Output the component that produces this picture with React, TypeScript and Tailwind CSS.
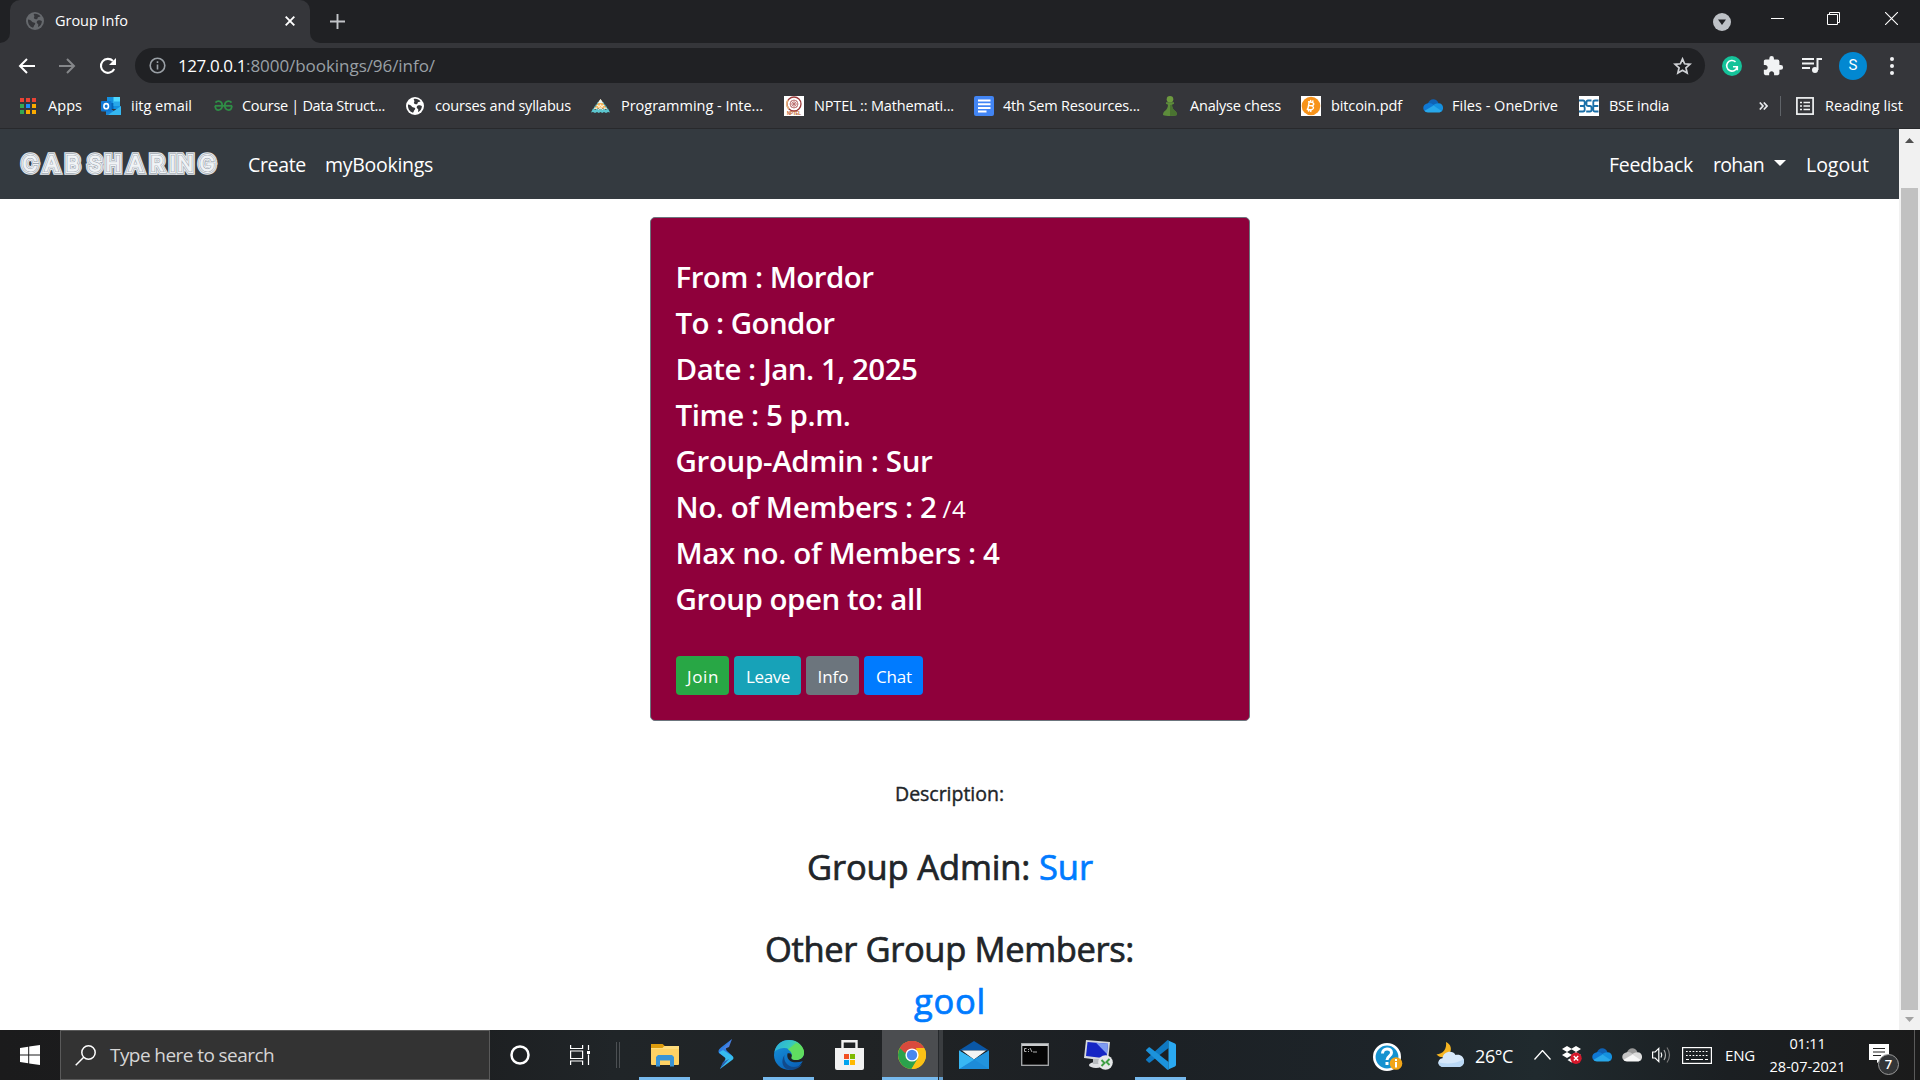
import { useLayoutEffect, useRef, useState } from "react";
import type { ReactNode } from "react";

/* Single line of text whose tracking is adjusted so that it fills a given width. */
function Fit({ w, className = "", children }: { w: number; className?: string; children: string }) {
  const ref = useRef<HTMLSpanElement>(null);
  const [spacing, setSpacing] = useState(0);
  useLayoutEffect(() => {
    if (ref.current) setSpacing((w - ref.current.getBoundingClientRect().width) / children.length);
  }, []);
  return (
    <span ref={ref} className={"inline-block shrink-0 whitespace-pre " + className} style={{ letterSpacing: spacing + "px" }}>
      {children}
    </span>
  );
}

/* ---------- small icons ---------- */

const GlobeIcon = ({ size, fill, land }: { size: number; fill: string; land: string }) => (
  <svg width={size} height={size} viewBox="0 0 18 18">
    <circle cx="9" cy="9" r="9" fill={fill} />
    <path d="M2 7.500c2 .2 3.500 1 4 2.200.8 1 2.800.3 3.200 1.600.2 1.200-1 1.700-1.300 2.600-.2.900-.6 1.900-1.500 1.700C3.600 14.500 1.600 11.500 2 7.500zM7.800 2c2.500-.6 5.200.4 6.700 2.300-.6.8-1.800.4-2.500 1-.6.600-.2 1.700-1.200 2-1 .2-2.200-.2-2.800-1-.5-.8.600-1.300.4-2.200-.1-.7-.9-1.200-.6-2.100zM12 8.500c1.400-.5 3 .2 3.900.7-.1 2.400-1.500 4.800-3.600 5.900-.7-.7.3-1.700 0-2.600-.4-.8-1.500-1-1.600-2-.1-.8.500-1.700 1.300-2z" fill={land} />
  </svg>
);

const AppsIcon = () => (
  <span className="grid w-4 grid-cols-3 gap-x-[2px] gap-y-[2px]">
    <i className="h-[4px] bg-[#ea4335]" /><i className="h-[4px] bg-[#ea4335]" /><i className="h-[4px] bg-[#ea4335]" />
    <i className="h-[4px] bg-[#34a853]" /><i className="h-[4px] bg-[#1a8cff]" /><i className="h-[4px] bg-[#fbab00]" />
    <i className="h-[4px] bg-[#34a853]" /><i className="h-[4px] bg-[#fbab00]" /><i className="h-[4px] bg-[#fbab00]" />
  </span>
);

const OutlookIcon = () => (
  <svg width="20" height="18" viewBox="0 0 20 18">
    <rect x="6" y="0" width="13" height="12" fill="#1490df" />
    <rect x="12.500" y="0" width="6.500" height="6" fill="#50d9ff" />
    <rect x="6" y="6" width="6.500" height="6" fill="#0364b8" />
    <rect x="12.500" y="4.500" width="6.500" height="4.500" fill="#28a8ea" />
    <path d="M5 9l8 5 7-5v9H5z" fill="#1a86d8" />
    <path d="M20 9v9H7z" fill="#35b8f1" />
    <rect x="0" y="4" width="10.500" height="10.500" rx="1" fill="#0f78d4" />
    <ellipse cx="5.200" cy="9.200" rx="2.300" ry="2.600" fill="none" stroke="#fff" strokeWidth="1.600" />
  </svg>
);

const GfgIcon = () => (
  <svg width="19" height="12" viewBox="0 0 19 12" fill="none" stroke="#2f8d46" strokeWidth="1.800">
    <path d="M1 5.800h17" />
    <path d="M1.500 2.600C3 .6 6.600.500 7.800 3.200c1.300 3.300-.3 7-3.300 7-1.900 0-3.200-1.700-3.400-4.400" />
    <path d="M17.500 2.600C16 .6 12.400.500 11.200 3.200c-1.300 3.300.3 7 3.300 7 1.900 0 3.200-1.700 3.400-4.400" />
  </svg>
);

const PyramidIcon = () => (
  <svg width="19" height="14" viewBox="0 0 19 14">
    <path d="M9.500 0L16 9.500H3z" fill="#f5b45c" />
    <path d="M9.500 0l2.700 4H6.800z" fill="#e8f6f6" />
    <path d="M5 6.500h2l1 1.500 1.500-2L11 8l1-1.500h2M3 10l2-1 2 2 2.500-2 2.500 2 2-2 2 1" stroke="#fff1d4" strokeWidth="1.100" fill="none" />
    <path d="M0 13.500l2-4 2 1.500 2-1.500 2 1.500 1.500-1.500L11 11l2-1.500 2 1.500 2-1.500 2 4-2-.600-2 1-2-1-1.800 1-1.700-1-1.700 1-1.800-1-2 1-2-1z" fill="#5cc6cf" />
    <path d="M7 3.500L2.500 10M12 3.500l4.500 6.500" stroke="#5cc6cf" strokeWidth="1.200" strokeDasharray="1.500 1" />
  </svg>
);

const NptelIcon = () => (
  <svg width="20" height="20" viewBox="0 0 20 20">
    <rect width="20" height="20" fill="#fff" />
    <circle cx="10" cy="8" r="7" fill="none" stroke="#9c3a3a" strokeWidth="1.300" />
    <path d="M4 4a7 7 0 0 0 1 9" stroke="#e6b07a" strokeWidth="1.800" fill="none" />
    <g stroke="#b56a6a" strokeWidth="0.800">
      <circle cx="10" cy="8" r="4" fill="#f9eaea" />
      <path d="M10 4v8M6 8h8M7.200 5.200l5.600 5.600M12.800 5.200l-5.600 5.600" />
    </g>
    <text x="3" y="19.400" fontSize="4.500" fontWeight="700" fill="#c0602c" textLength="14" fontFamily="Liberation Sans, sans-serif">NPTEL</text>
  </svg>
);

const DocsIcon = () => (
  <svg width="20" height="20" viewBox="0 0 20 20">
    <rect width="20" height="20" rx="2" fill="#4285f4" />
    <path d="M4 4.500h12.500M4 8.300h12.500M4 12h12.500M4 15.500h8.500" stroke="#fff" strokeWidth="1.900" />
  </svg>
);

const PawnIcon = () => (
  <svg width="14" height="20" viewBox="0 0 14 20">
    <circle cx="7" cy="3.300" r="3.300" fill="#6d9a3f" />
    <path d="M3 6.300h8v1.500L9 8.800c0 3 1.500 5 3.200 6.200 1.300 1 1.800 2 1.800 4-3 1.300-11 1.300-14 0 0-2 .5-3 1.800-4C3.500 13.800 5 11.800 5 8.800L3 7.800z" fill="#5d8c3b" />
    <path d="M7 9v10.900c3 0 5-.3 7-.9 0-2-.5-3-1.800-4C10.500 13.800 9 11.800 9 8.800z" fill="#4a7331" />
  </svg>
);

const BitcoinIcon = () => (
  <svg width="20" height="20" viewBox="0 0 20 20">
    <rect width="20" height="20" fill="#fff" />
    <circle cx="10" cy="10" r="9.300" fill="#f7931a" />
    <path d="M8.300 5.500l-1.700 8.800M7 5.800l4 .6c2.700.6 2.200 3.500-.9 3.300l-2.200-.3 2.700.4c3 .8 2.300 4.200-1.300 3.900l-3.600-.5M9.800 4l-.4 2M12 4.400l-.4 2M7.900 13.600l-.4 2M10 14l-.4 2" fill="none" stroke="#fff" strokeWidth="1.400" />
  </svg>
);

const CloudIcon = ({ w, dark, mid, light, low }: { w: number; dark: string; mid: string; light: string; low: string }) => (
  <svg width={w} height={(w * 14) / 20} viewBox="0 0 20 14">
    <path d="M4.800 5C6.200-.8 13.600-1.500 15.500 4.300L11 8.500z" fill={dark} />
    <path d="M4.800 4.300c2.200-.6 4 .4 6.200 2L3 13C-.8 11.600-1 5.500 4.800 4.300z" fill={mid} />
    <path d="M15.500 4.300c5.300 0 5.700 6.700 2.500 8.400L9.500 7c1.500-1.600 3.400-2.700 6-2.700z" fill={light} />
    <path d="M10.500 6.400L18.600 12c-.7.800-1.500 1.500-3 1.500H4.800c-1.400 0-2.500-.7-3.200-1.700z" fill={low} />
  </svg>
);

const BseIcon = () => (
  <svg width="20" height="20" viewBox="0 0 20 20">
    <rect width="20" height="20" fill="#fff" />
    <path d="M0 4.500h4Q5.700 4.500 5.700 6v2.300Q5.700 10 4 10H1h3Q5.700 10 5.700 12v1.800Q5.700 15.500 4 15.500H0M12.500 4.500H9Q7.500 4.500 7.500 6v2.500Q7.500 10 9 10h2Q12.500 10 12.500 11.700v2q0 1.800-1.500 1.800H7.200M19.500 4.500H16Q14.300 4.500 14.300 6v8q0 1.500 1.700 1.500h3.500M14.300 10h5" fill="none" stroke="#1a6fa8" strokeWidth="1.800" />
  </svg>
);

/* ---------- browser chrome ---------- */

function TabStrip() {
  return (
    <div className="flex h-[43px] bg-[#202124]">
      <div className="flex w-[10px] items-end"><span className="size-[10px] bg-[#35363a]"><span className="block size-full rounded-br-[10px] bg-[#202124]" /></span></div>
      <div className="flex w-[300px] items-center rounded-t-[10px] bg-[#35363a] pb-[1px] pl-4">
        <GlobeIcon size={18} fill="#66696d" land="#35363a" />
        <Fit w={73} className="ml-[11px] text-[14.5px] text-white">Group Info</Fit>
        <svg className="mr-[15px] ml-auto" width="10" height="10" viewBox="0 0 10 10" stroke="#fff" strokeWidth="1.900"><path d="M.7.700l8.600 8.600M9.300.700L.7 9.300" /></svg>
      </div>
      <div className="flex w-[10px] items-end"><span className="size-[10px] bg-[#35363a]"><span className="block size-full rounded-bl-[10px] bg-[#202124]" /></span></div>
      <svg className="mt-[14px] ml-[10px]" width="15" height="15" viewBox="0 0 15 15" stroke="#c2c4c8" strokeWidth="1.900"><path d="M7.500 0v15M0 7.500h15" /></svg>
      <div className="ml-auto flex">
        <svg className="mt-[13px]" width="18" height="18" viewBox="0 0 18 18"><circle cx="9" cy="9" r="9" fill="#bdc1c6" /><path d="M5 6.500h8L9 12z" fill="#202124" /></svg>
        <svg className="mt-3 ml-10" width="13" height="13" viewBox="0 0 13 13" stroke="#fff"><path d="M0 6.500h13" /></svg>
        <svg className="mt-3 ml-[43px]" width="13" height="13" viewBox="0 0 13 13" stroke="#fff" fill="none"><path d="M.5 2.500h10v10H.5zM2.500 2.500v-2h10v10h-2" /></svg>
        <svg className="mt-3 mr-[22px] ml-[45px]" width="13" height="13" viewBox="0 0 13 13" stroke="#fff" strokeWidth="1.100"><path d="M0 0l13 13M13 0L0 13" /></svg>
      </div>
    </div>
  );
}

function AddressBar() {
  return (
    <div className="flex h-[45px] items-center bg-[#35363a] pl-[18px]">
      <svg width="17" height="16" viewBox="0 0 17 16" fill="none" stroke="#fff" strokeWidth="2"><path d="M17 8H2M9 1L2 8l7 7" /></svg>
      <svg className="ml-[24px]" width="17" height="16" viewBox="0 0 17 16" fill="none" stroke="#85878a" strokeWidth="2"><path d="M0 8h15M8 1l7 7-7 7" /></svg>
      <svg className="ml-[23px]" width="18" height="18" viewBox="0 0 18 18" fill="none" stroke="#fff" strokeWidth="2.100"><path d="M15.200 12A7 7 0 1 1 14 4" /><path d="M17 1v7h-7z" fill="#fff" stroke="none" /></svg>
      <div className="ml-[18px] flex h-[35px] w-[1570px] items-center rounded-full bg-[#202124] pr-[13px] pl-[14px]">
        <svg width="17" height="17" viewBox="0 0 17 17" fill="none" stroke="#9aa0a6" strokeWidth="1.600"><circle cx="8.500" cy="8.500" r="7.300" /><path d="M8.500 7.500v5M8.500 4.300v1.700" /></svg>
        <Fit w={68} className="ml-[12px] text-[17px] text-white">127.0.0.1</Fit>
        <Fit w={189} className="text-[17px] text-[#9aa0a6]">:8000/bookings/96/info/</Fit>
        <svg className="ml-auto" width="19" height="18" viewBox="0 0 24 23" fill="none" stroke="#d0d2d6" strokeWidth="2.200"><path d="M12 2.500l2.700 6.200 6.800.6-5.100 4.500 1.500 6.600L12 16.900l-5.900 3.500 1.500-6.600-5.100-4.500 6.800-.6z" /></svg>
      </div>
      <svg className="ml-[17px]" width="20" height="20" viewBox="0 0 20 20"><circle cx="10" cy="10" r="10" fill="#15c39a" /><path d="M13.500 5.800A5.300 5.300 0 1 0 15 11.500M11 10.800h4.300v3.500" fill="none" stroke="#fff" strokeWidth="1.600" /></svg>
      <svg className="ml-[20px]" width="22" height="22" viewBox="0 0 24 24" fill="#f1f3f4"><path d="M20.500 11H19V7c0-1.100-.9-2-2-2h-4V3.500a2.500 2.500 0 0 0-5 0V5H4c-1.100 0-1.990.9-1.990 2v3.800H3.500c1.490 0 2.700 1.210 2.700 2.700s-1.210 2.700-2.700 2.700H2V20c0 1.100.9 2 2 2h3.800v-1.500c0-1.490 1.210-2.700 2.700-2.700s2.700 1.210 2.700 2.700V22H17c1.100 0 2-.9 2-2v-4h1.500a2.500 2.500 0 0 0 0-5z" /></svg>
      <svg className="ml-[18px]" width="20" height="17" viewBox="0 0 20 17" fill="none" stroke="#f1f3f4" strokeWidth="2"><path d="M0 2h12M0 6.500h12M0 11h8M15.500 13V2h4.500" /><circle cx="13" cy="13" r="3" fill="#f1f3f4" stroke="none" /></svg>
      <div className="ml-[17px] flex size-7 items-center justify-center rounded-full bg-[#0288d1] font-[Roboto,sans-serif] text-[15px] text-white">S</div>
      <div className="ml-[23px] flex flex-col gap-[3px]">
        <i className="size-[4px] rounded-full bg-[#f1f3f4]" /><i className="size-[4px] rounded-full bg-[#f1f3f4]" /><i className="size-[4px] rounded-full bg-[#f1f3f4]" />
      </div>
    </div>
  );
}

const bookmarks: { icon: ReactNode; label: string; w: number; item: string; slot: string }[] = [
  { icon: <AppsIcon />, label: "Apps", w: 34, item: "w-[81px]", slot: "w-[28px]" },
  { icon: <OutlookIcon />, label: "iitg email", w: 61, item: "w-[113px]", slot: "w-[30px]" },
  { icon: <GfgIcon />, label: "Course | Data Struct...", w: 143, item: "w-[192px]", slot: "w-[28px]" },
  { icon: <GlobeIcon size={18} fill="#fff" land="#35363a" />, label: "courses and syllabus", w: 136, item: "w-[185px]", slot: "w-[29px]" },
  { icon: <PyramidIcon />, label: "Programming - Inte...", w: 142, item: "w-[193px]", slot: "w-[30px]" },
  { icon: <NptelIcon />, label: "NPTEL :: Mathemati...", w: 140, item: "w-[190px]", slot: "w-[30px]" },
  { icon: <DocsIcon />, label: "4th Sem Resources...", w: 137, item: "w-[189px]", slot: "w-[29px]" },
  { icon: <PawnIcon />, label: "Analyse chess", w: 91, item: "w-[138px]", slot: "w-[27px]" },
  { icon: <BitcoinIcon />, label: "bitcoin.pdf", w: 71, item: "w-[122px]", slot: "w-[30px]" },
  { icon: <CloudIcon w={20} dark="#0f62b5" mid="#0f78d4" light="#1490df" low="#28a8ea" />, label: "Files - OneDrive", w: 106, item: "w-[156px]", slot: "w-[29px]" },
  { icon: <BseIcon />, label: "BSE india", w: 60, item: "w-[180px]", slot: "w-[30px]" },
];

function BookmarksBar() {
  return (
    <div className="flex h-[41px] items-center border-b border-[#28292c] bg-[#35363a] pb-[4px] pl-5 text-[14.500px] text-white">
      {bookmarks.map((b) => (
        <div key={b.label} className={"flex shrink-0 items-center " + b.item}>
          <span className={"flex shrink-0 " + b.slot}>{b.icon}</span>
          <Fit w={b.w}>{b.label}</Fit>
        </div>
      ))}
      <svg width="9" height="8" viewBox="0 0 9 8" fill="none" stroke="#e8eaed" strokeWidth="1.700"><path d="M.8.500L4 4 .8 7.500M4.800.500L8 4 4.800 7.500" /></svg>
      <span className="ml-[12px] h-5 w-px bg-[#5f6368]" />
      <svg className="ml-[15px]" width="18" height="18" viewBox="0 0 18 18" fill="none" stroke="#f1f3f4" strokeWidth="1.700"><rect x=".9" y=".9" width="16.200" height="16.200" /><path d="M4 5.500h2M4 9h2M4 12.500h2M7.500 5.500h6.500M7.500 9h6.500M7.500 12.500h6.500" /></svg>
      <Fit w={78} className="ml-[11px]">Reading list</Fit>
    </div>
  );
}

/* ---------- page ---------- */

/* Inline display lettering: concentric contour lines around thin letters. */
function Logo() {
  const xs = "22.500 44.500 66 88.500 105.500 128.500 150.500 170 177.500 199.500";
  const layers: [number, string][] = [[7.4, "#e6eaef"], [5.4, "#a3aab3"], [4.200, "#f1f4f7"], [2.200, "#a3aab3"], [1, "#f1f4f7"]];
  return (
    <svg className="shrink-0" width="220" height="70" viewBox="0 0 220 70" fontFamily="Inter, sans-serif" fontWeight="300" fontSize="20.500" strokeLinejoin="miter" strokeMiterlimit="2">
      {layers.map(([sw, c]) => (
        <text key={sw} x={xs} y="41.500" fill={c} stroke={c} strokeWidth={sw}>CABSHARING</text>
      ))}
    </svg>
  );
}

function Navbar() {
  return (
    <nav className="flex h-[70px] items-center bg-[#343a40] text-[19.500px] text-white">
      <Logo />
      <Fit w={58} className="mt-[2px] ml-[28px]">Create</Fit>
      <Fit w={108} className="mt-[2px] ml-[19px]">myBookings</Fit>
      <Fit w={84} className="mt-[2px] ml-auto">Feedback</Fit>
      <Fit w={51} className="mt-[2px] ml-[20px]">rohan</Fit>
      <svg className="mb-[2px] ml-[10px]" width="12" height="6" viewBox="0 0 12 6"><path d="M0 0h12L6 6z" fill="#fff" /></svg>
      <Fit w={63} className="mt-[2px] mr-[30px] ml-[20px]">Logout</Fit>
    </nav>
  );
}

const details: { text: string; w: number; suffix?: string }[] = [
  { text: "From : Mordor", w: 198 },
  { text: "To : Gondor", w: 159 },
  { text: "Date : Jan. 1, 2025", w: 242 },
  { text: "Time : 5 p.m.", w: 175 },
  { text: "Group-Admin : Sur", w: 257 },
  { text: "No. of Members : 2", w: 261, suffix: "/4" },
  { text: "Max no. of Members : 4", w: 324 },
  { text: "Group open to: all", w: 247 },
];

function Button({ w, className, children }: { w: number; className: string; children: string }) {
  return (
    <button className={"flex h-[39px] items-center justify-center rounded-[4px] pt-[2px] pl-[2px] text-[17px] text-white " + className}>
      <Fit w={w}>{children}</Fit>
    </button>
  );
}

function Page() {
  return (
    <main className="flex h-[831px] flex-1 flex-col items-center overflow-hidden bg-white pt-[18px] text-[#212529]">
      <section className="h-[504px] w-[600px] shrink-0 rounded-[5px] border border-[#6c757d] bg-[#8f003b] px-[25px] pt-[36px]">
        {details.map((d) => (
          <div key={d.text} className="flex h-[46px] items-baseline text-[29.500px] leading-[46px] font-semibold text-white">
            <Fit w={d.w}>{d.text}</Fit>
            {d.suffix && <Fit w={24} className="ml-[6px] text-[24px] font-normal">{d.suffix}</Fit>}
          </div>
        ))}
        <div className="mt-[34px] flex gap-[5px]">
          <Button w={32} className="w-[53px] bg-[#28a745]">Join</Button>
          <Button w={44} className="w-[67px] bg-[#17a2b8]">Leave</Button>
          <Button w={31} className="w-[53px] bg-[#6c757d]">Info</Button>
          <Button w={36} className="w-[59px] bg-[#007bff]">Chat</Button>
        </div>
      </section>
      <h5 className="mt-[61px] h-6 text-[19.500px] leading-6 font-medium [-webkit-text-stroke:0.4px]"><Fit w={109}>Description:</Fit></h5>
      <h2 className="mt-[40px] flex h-[42px] pl-px text-[34.500px] leading-[42px] font-medium [-webkit-text-stroke:0.7px]">
        <Fit w={232}>Group Admin: </Fit><Fit w={54} className="text-[#007bff]">Sur</Fit>
      </h2>
      <h2 className="mt-[40px] h-[42px] text-[34.500px] leading-[42px] font-medium [-webkit-text-stroke:0.7px]"><Fit w={369}>Other Group Members:</Fit></h2>
      <h2 className="mt-[10px] h-[42px] pl-px text-[34.500px] leading-[42px] font-medium text-[#007bff] [-webkit-text-stroke:0.7px]"><Fit w={72}>gool</Fit></h2>
    </main>
  );
}

function Scrollbar() {
  return (
    <div className="flex w-[21px] flex-col items-center bg-[#f1f1f1]">
      <svg className="mt-[9px]" width="9" height="5" viewBox="0 0 9 5"><path d="M0 5h9L4.500 0z" fill="#505050" /></svg>
      <div className="mt-[45px] h-[822px] w-[17px] bg-[#c1c1c1]" />
      <svg className="mt-[7px]" width="9" height="5" viewBox="0 0 9 5"><path d="M0 0h9L4.500 5z" fill="#a3a3a3" /></svg>
    </div>
  );
}

/* ---------- taskbar ---------- */

function TaskIcon({ className, bar, children }: { className: string; bar?: string; children: ReactNode }) {
  return (
    <div className={"flex h-full shrink-0 flex-col items-center " + className}>
      <div className="flex flex-1 items-center pt-[2px]">{children}</div>
      <div className={"h-[3px] " + (bar ?? "")} />
    </div>
  );
}

function TaskbarApps() {
  return (
    <>
      <TaskIcon className="w-[51px]" bar="w-full bg-[#76b9ed]">
        <svg width="28" height="24" viewBox="0 0 28 24">
          <path d="M0 1h11l2 3v4H0z" fill="#dd9b0c" /><rect y="3" width="28" height="19" rx="1" fill="#ffd264" /><path d="M0 5l13-1 2-1h13v3H0z" fill="#ffdc7c" /><path d="M0 1h11.500l2 1.500L11.500 5H0z" fill="#dd9b0c" />
          <path d="M5 23.500V14l2-2h14l2 2v9.500h-4v-6H9v6z" fill="#3a94d6" />
        </svg>
      </TaskIcon>
      <TaskIcon className="ml-[10px] w-[51px]">
        <svg width="16" height="31" viewBox="0 0 16 31">
          <path d="M14 0L3 8.500C0 11 0 13 1.500 14.500L9 20l5-3.500-5-4.500c-1.500-1.500-1-3-.5-4z" fill="#2c7fe4" />
          <path d="M5 11l9.500 6c1.300 1.300 1.300 2.700 0 3.800L2 30l4-7.500c1-1.500 2-2.500 1-4L1 13.500z" fill="#36bdf0" />
          <path d="M14 0l-3 8-7 3z" fill="#4b7fe0" /><path d="M2 30l3-7 6-3z" fill="#2b5fb0" />
        </svg>
      </TaskIcon>
      <TaskIcon className="ml-[12px] w-[51px]" bar="w-full bg-[#76b9ed]">
        <svg width="30" height="30" viewBox="0 0 30 30">
          <defs>
            <linearGradient id="edgeTop" x1="0" y1="0" x2="1" y2=".5"><stop offset="0" stopColor="#2aa9e0" /><stop offset=".5" stopColor="#35c6c4" /><stop offset="1" stopColor="#6be84a" /></linearGradient>
            <linearGradient id="edgeLeft" x1="0" y1="0" x2=".6" y2="1"><stop offset="0" stopColor="#1796dd" /><stop offset="1" stopColor="#0a62b8" /></linearGradient>
          </defs>
          <circle cx="15" cy="15" r="15" fill="url(#edgeLeft)" />
          <path d="M.5 12C2 4 8 0 15 0c9 0 15 6.500 15 12.500 0 5-4 7.500-8 7.500-3 0-5-1-4.500-2.500C20 13 15 7 9.500 8 5 8.500 2 10 .5 12z" fill="url(#edgeTop)" />
          <path d="M10.500 15c-1.500 6 3 12 9.500 12 3 0 5.500-1 8-3-2.500 4-7 6-12 6C9 29 6 22 10.500 15z" fill="#114a8b" />
          <path d="M13.500 13.500C12 20 18 24.500 28.700 21.300L30 22V12.500C30 18 26 20 22 20c-3.500 0-5-1.300-4.200-3 .6-2-.8-4.500-4.300-3.500z" fill="#1f2326" />
          <path d="M30 12.500C30 18 26 20 22 20c-3 0-5-1-4.500-2.500C19 14.500 17 11 14 9.500L22 3c5 2 8 6 8 9.500z" fill="#60dd60" />
        </svg>
      </TaskIcon>
      <TaskIcon className="ml-[10px] w-[51px]">
        <svg width="29" height="30" viewBox="0 0 29 30">
          <path d="M7.500 10V1.200h14V10" fill="none" stroke="#f2f2f2" strokeWidth="2.400" /><path d="M0 8h29v20q0 2-2 2H2q-2 0-2-2z" fill="#f2f2f2" />
          <path d="M9 14h5v5H9z" fill="#f25022" /><path d="M15 14h5v5h-5z" fill="#7fba00" /><path d="M9 20h5v5H9z" fill="#00a4ef" /><path d="M15 20h5v5h-5z" fill="#ffb900" />
        </svg>
      </TaskIcon>
      <TaskIcon className="ml-[7px] w-[56px] bg-[#4b4d50]" bar="w-full bg-[#76b9ed]">
        <svg className="ml-[3px]" width="28" height="28" viewBox="0 0 28 28">
          <circle cx="14" cy="14" r="14" fill="#fbc116" />
          <path d="M14 14L1.900 7A14 14 0 0 1 26.100 7z" fill="#d94a3d" /><path d="M1.900 7A14 14 0 0 0 13.500 28l6.500-11z" fill="#2ba24c" /><path d="M26.100 7A14 14 0 0 1 13.500 28l7-11L18 7z" fill="#fbc116" />
          <path d="M7 12L2 7c3-5 7-7 12-7s9.500 2.500 12.100 7H14z" fill="#d94a3d" />
          <circle cx="14" cy="14" r="6.600" fill="#fff" /><circle cx="14" cy="14" r="5.200" fill="#4a87ee" />
        </svg>
      </TaskIcon>
      <TaskIcon className="w-[5px] border-l border-[#25282b] bg-[#3a3d40]" bar="w-full bg-[#66a0cf]"><span /></TaskIcon>
      <TaskIcon className="ml-[5px] w-[51px]">
        <svg width="30" height="28" viewBox="0 0 30 28">
          <path d="M15 0l15 9.500H0z" fill="#0a57a6" /><path d="M3 9.500h24L15 18.500z" fill="#f4f4f4" />
          <path d="M0 9.500L15 18.500V28H0z" fill="#2aa5ea" /><path d="M30 9.500L0 28h30z" fill="#1d8bd8" /><path d="M0 9.500L15 18.500 0 28z" fill="#38b6f3" /><path d="M15 18.500L30 28V9.500z" fill="#2193de" />
        </svg>
      </TaskIcon>
      <TaskIcon className="ml-[10px] w-[51px]">
        <svg width="28" height="23" viewBox="0 0 28 23">
          <rect x=".7" y=".7" width="26.600" height="21.600" fill="#050505" stroke="#a9acae" strokeWidth="1.300" /><path d="M1 2h26" stroke="#c9cbcd" strokeWidth="2" />
          <path d="M5.500 5.500H3.500v3h2M7.500 6v1M7.500 8v1M9 5l2 4M12 9h4" stroke="#b0b0b0" strokeWidth="1" fill="none" />
        </svg>
      </TaskIcon>
      <TaskIcon className="ml-[13px] w-[51px]">
        <svg width="29" height="30" viewBox="0 0 29 30">
          <path d="M2 0l24 2-2 19L0 18z" fill="#d7dadd" /><path d="M3.500 2l20.500 1.700L22.500 18.500 2 16z" fill="#1626c4" /><path d="M12 2.700L24 3.700 23 14z" fill="#7f9cf0" />
          <ellipse cx="12" cy="25" rx="7" ry="3" fill="#dfe1e4" /><path d="M9 19h7v5H9z" fill="#b8bcc0" />
          <circle cx="21.500" cy="22.500" r="7.300" fill="#e6e8ea" /><path d="M17.500 20l3 3-3 3M25.500 19l-3 3 3 3" stroke="#3f9f45" strokeWidth="1.900" fill="none" />
        </svg>
      </TaskIcon>
      <TaskIcon className="ml-[11px] w-[51px]" bar="w-full bg-[#76b9ed]">
        <svg width="30" height="30" viewBox="0 0 30 30">
          <path d="M22.500 8L4 22.500c-.5.400-1 .400-1.400 0L.4 20.500c-.5-.5-.5-1.200 0-1.600L21 .6l1.500-.600z" fill="#0f79c2" /><path d="M22.500 22L4 7.500c-.5-.4-1-.4-1.400 0L.4 9.500c-.5.500-.5 1.200 0 1.600L21 29.400l1.500.600z" fill="#1c93dc" />
          <path d="M21 0l8 3.500c.6.300 1 .9 1 1.500v20c0 .600-.4 1.200-1 1.500L21 30c1 0 1.500-.5 1.500-1.500v-27C22.500.5 22 0 21 0z" fill="#2aa9f2" />
        </svg>
      </TaskIcon>
    </>
  );
}

function Tray() {
  return (
    <>
      <svg className="mt-[3px] ml-[187px] shrink-0" width="31" height="28" viewBox="0 0 31 28">
        <circle cx="14" cy="14" r="12.700" fill="#1592d0" stroke="#fff" strokeWidth="2.600" />
        <path d="M9.500 10.500c0-6 9-6 9-.8 0 3.500-4.500 3.300-4.500 7.300M14 19v3" stroke="#fff" strokeWidth="3" fill="none" />
        <circle cx="23" cy="20.500" r="6.300" fill="#f2a518" /><path d="M23 19v5.500M23 16v2" stroke="#fff" strokeWidth="2" />
      </svg>
      <svg className="mb-[2px] ml-[32px] shrink-0" width="28" height="25" viewBox="0 0 28 25">
        <path d="M10 0c5 2 6.500 8 3 12-3.500 4-9.500 4-12.500.5C7 12 11 7 10 0z" fill="#f6b521" />
        <path d="M8 25c-7 0-7.500-8-1.500-8.800C7 9 17 7.500 19.500 13c5-1 8.500 2 8.500 6 0 3.500-2 6-6 6z" fill="#d6e8fa" />
        <path d="M8 25c-4 0-6-2.500-5.500-5 6 2.500 18 2 25.300-3 1 4.500-1.500 8-5.800 8z" fill="#b9d8f5" />
      </svg>
      <Fit w={38} className="mt-[2px] ml-[11px] text-[18px] text-white">26°C</Fit>
      <svg className="mb-[1px] ml-[21px] shrink-0" width="17" height="10" viewBox="0 0 17 10" fill="none" stroke="#fff" strokeWidth="1.300"><path d="M.5 9.500l8-9 8 9" /></svg>
      <svg className="mb-[1px] ml-[11px] shrink-0" width="20" height="18" viewBox="0 0 20 18">
        <path d="M5 0l5 3-5 3-5-3zM14 0l5 3-5 3-5-3zM5 6l5 3-5 3-5-3zM14 6l5 3-5 3-5-3zM9.500 11.500l4 2.500-4 2.500-4-2.500z" fill="#fff" />
        <circle cx="14" cy="12.300" r="5.700" fill="#d5182b" /><path d="M11.800 10.100l4.400 4.400M16.200 10.100l-4.400 4.400" stroke="#fff" strokeWidth="1.400" />
      </svg>
      <span className="ml-[10px] shrink-0"><CloudIcon w={20} dark="#0f62b5" mid="#0f78d4" light="#1490df" low="#28a8ea" /></span>
      <span className="ml-[10px] shrink-0"><CloudIcon w={20} dark="#9a9a9a" mid="#c4c4c4" light="#dcdcdc" low="#f7f7f7" /></span>
      <svg className="ml-[10px] shrink-0" width="20" height="18" viewBox="0 0 20 18" fill="none" stroke="#fff" strokeWidth="1.200">
        <path d="M.6 6v6h2.600l3.600 3.600V2.400L3.200 6z" /><path d="M9 6.500q1.500 2.500 0 5" /><path d="M12 4q3 5 0 10" stroke="#aaa" /><path d="M15 1.500q5 7.500 0 15" stroke="#777" />
      </svg>
      <svg className="ml-[10px] shrink-0" width="30" height="17" viewBox="0 0 30 17" fill="none" stroke="#fff" strokeWidth="1.200"><rect x=".6" y=".6" width="28.800" height="15.800" /><path d="M4 4.500h23M4 8.500h23" strokeDasharray="1.700 1.600" /><path d="M4 12.500h3M9 12.500h12M23 12.500h3" /></svg>
      <Fit w={30} className="ml-[13px] text-[15px] text-white">ENG</Fit>
      <div className="ml-[14px] flex w-[77px] shrink-0 flex-col items-center text-[14.500px] leading-[23px] text-white">
        <Fit w={36}>01:11</Fit>
        <Fit w={76}>28-07-2021</Fit>
      </div>
      <div className="relative ml-[23px] size-[22px] shrink-0">
        <svg width="20" height="19" viewBox="0 0 20 19"><path d="M0 0h20v16h-8l-4 3v-3H0z" fill="#fff" /><path d="M4 4.500h12M4 8h12M4 11.500h8" stroke="#222" strokeWidth="1.200" /></svg>
        <span className="absolute top-[10px] left-[9px] flex size-[21px] items-center justify-center rounded-full border border-[#9a9a9a] bg-[#333537] text-[13px] font-semibold text-white">7</span>
      </div>
      <span className="ml-[23px] h-full w-px shrink-0 bg-[#5a5a5a]" />
    </>
  );
}

function Taskbar() {
  return (
    <footer className="flex h-[50px] items-center overflow-hidden bg-[linear-gradient(90deg,#1b1b1c_0%,#1d1f21_24%,#202528_32%,#202325_45%,#1c2024_58%,#1d2429_72%,#202a2e_80%,#1b1f22_90%,#1b1b1b_100%)]">
      <svg className="ml-5 shrink-0" width="20" height="20" viewBox="0 0 20 20" fill="#fff"><path d="M0 2.900l8.200-1.200v7.800H0zM9.200 1.500L20 0v9.500H9.200zM0 10.500h8.200v7.800L0 17.100zM9.200 10.500H20V20L9.200 18.500z" /></svg>
      <div className="ml-5 flex h-[50px] w-[430px] shrink-0 items-center border border-[#5a5a5a] bg-[#333] pl-[14px]">
        <svg width="21" height="21" viewBox="0 0 21 21" fill="none" stroke="#fff" strokeWidth="1.500"><circle cx="13.500" cy="7.500" r="6.700" /><path d="M8.700 12.300L.7 20.300" /></svg>
        <Fit w={164} className="ml-[14px] text-[19px] text-[#d6d6d6]">Type here to search</Fit>
      </div>
      <svg className="ml-5 shrink-0" width="20" height="20" viewBox="0 0 20 20"><circle cx="10" cy="10" r="8.500" fill="none" stroke="#fff" strokeWidth="2.500" /></svg>
      <svg className="ml-[40px] shrink-0" width="20" height="20" viewBox="0 0 20 20" fill="none" stroke="#fff" strokeWidth="1.200"><path d="M.6 0v3.500h12V0M.6 20v-4h12v4M.6 6h12v7.500H.6zM18.500 0v5M18.500 9.500V20" /><path d="M17 6h3v3h-3z" fill="#fff" stroke="none" /></svg>
      <span className="ml-[26px] h-[26px] w-1 shrink-0 border-x border-[#4c5053]" />
      <div className="ml-[19px] flex h-full shrink-0"><TaskbarApps /></div>
      <Tray />
    </footer>
  );
}

export default function App() {
  return (
    <div className="h-[1080px] w-[1920px] overflow-hidden bg-white font-['Open_Sans','Noto_Sans',sans-serif]">
      <TabStrip />
      <AddressBar />
      <BookmarksBar />
      <div className="flex h-[901px]">
        <div className="flex flex-1 flex-col">
          <Navbar />
          <Page />
        </div>
        <Scrollbar />
      </div>
      <Taskbar />
    </div>
  );
}
